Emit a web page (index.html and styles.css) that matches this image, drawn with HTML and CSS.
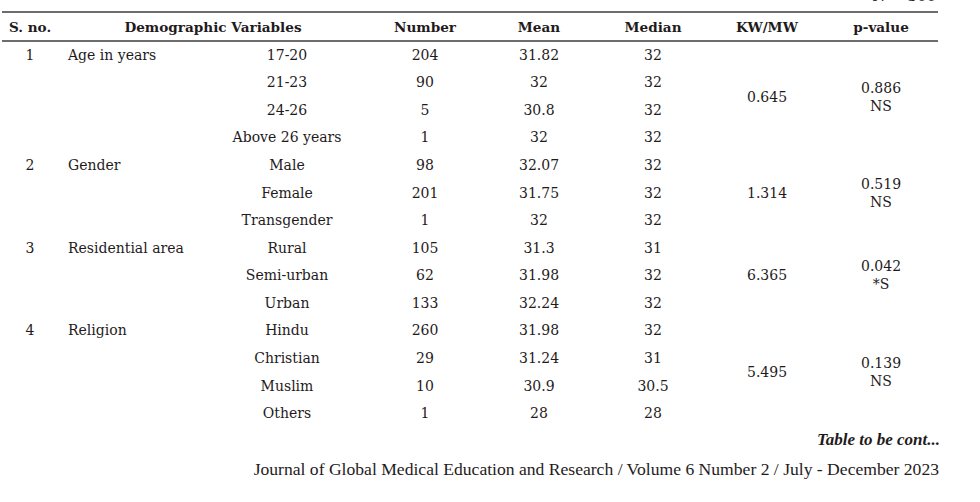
FILE: index.html
```html
<!DOCTYPE html>
<html lang="en">
<head>
    <meta charset="UTF-8">
    <title>Demographic Variables</title>
    <link rel="stylesheet" href="styles.css">
</head>
<body>
    <div class="page">
        <p class="note">N = 300</p>

        <!-- Demographic table -->
        <table class="data">
            <colgroup>
                <col class="c-sno">
                <col class="c-cat">
                <col class="c-sub">
                <col class="c-num">
                <col class="c-num">
                <col class="c-num">
                <col class="c-num">
                <col class="c-num">
            </colgroup>
            <thead>
                <tr>
                    <th>S. no.</th>
                    <th colspan="2">Demographic Variables</th>
                    <th>Number</th>
                    <th>Mean</th>
                    <th>Median</th>
                    <th>KW/MW</th>
                    <th>p-value</th>
                </tr>
            </thead>
            <tbody>
                <tr>
                    <td>1</td>
                    <td class="cat">Age in years</td>
                    <td>17-20</td><td>204</td><td>31.82</td><td>32</td>
                    <td rowspan="4">0.645</td>
                    <td rowspan="4">0.886<br>NS</td>
                </tr>
                <tr><td></td><td></td><td>21-23</td><td>90</td><td>32</td><td>32</td></tr>
                <tr><td></td><td></td><td>24-26</td><td>5</td><td>30.8</td><td>32</td></tr>
                <tr><td></td><td></td><td>Above 26 years</td><td>1</td><td>32</td><td>32</td></tr>

                <tr>
                    <td>2</td>
                    <td class="cat">Gender</td>
                    <td>Male</td><td>98</td><td>32.07</td><td>32</td>
                    <td rowspan="3">1.314</td>
                    <td rowspan="3">0.519<br>NS</td>
                </tr>
                <tr><td></td><td></td><td>Female</td><td>201</td><td>31.75</td><td>32</td></tr>
                <tr><td></td><td></td><td>Transgender</td><td>1</td><td>32</td><td>32</td></tr>

                <tr>
                    <td>3</td>
                    <td class="cat">Residential area</td>
                    <td>Rural</td><td>105</td><td>31.3</td><td>31</td>
                    <td rowspan="3">6.365</td>
                    <td rowspan="3">0.042<br>*S</td>
                </tr>
                <tr><td></td><td></td><td>Semi-urban</td><td>62</td><td>31.98</td><td>32</td></tr>
                <tr><td></td><td></td><td>Urban</td><td>133</td><td>32.24</td><td>32</td></tr>

                <tr>
                    <td>4</td>
                    <td class="cat">Religion</td>
                    <td>Hindu</td><td>260</td><td>31.98</td><td>32</td>
                    <td rowspan="4">5.495</td>
                    <td rowspan="4">0.139<br>NS</td>
                </tr>
                <tr><td></td><td></td><td>Christian</td><td>29</td><td>31.24</td><td>31</td></tr>
                <tr><td></td><td></td><td>Muslim</td><td>10</td><td>30.9</td><td>30.5</td></tr>
                <tr><td></td><td></td><td>Others</td><td>1</td><td>28</td><td>28</td></tr>
            </tbody>
        </table>

        <p class="cont">Table to be cont...</p>
        <p class="footer">Journal of Global Medical Education and Research / Volume 6 Number 2 / July - December 2023</p>
    </div>
</body>
</html>
```

FILE: styles.css
```css
/* Basic Reset */
* {
    box-sizing: border-box;
    margin: 0;
    padding: 0;
}

body {
    background: #fff;
    color: #1f1b1c;
    font-family: "DejaVu Serif", "Liberation Serif", serif;
    font-size: 14px;
}

.page {
    width: 980px;
    height: 502px;
    overflow: hidden;
    padding: 0 2px;
}

/* N = 300 note, mostly cut off above */
.note {
    width: 936px;
    height: 11px;
    line-height: 14px;
    margin-top: -11px;
    text-align: right;
    padding-right: 2px;
    font-size: 15px;
}

/* Table */
.data {
    width: 936px;
    border-collapse: collapse;
    table-layout: fixed;
    margin-top: 11px;
}

.c-sno { width: 56px; }
.c-cat { width: 148px; }
.c-sub { width: 162px; }
.c-num { width: 114px; }

.data th {
    font-weight: bold;
    font-size: 13.6px;
    height: 29px;
    border-top: 2px solid #6d6d6d;
    border-bottom: 2px solid #6d6d6d;
    text-align: center;
    vertical-align: middle;
    line-height: 18px;
}

.data td {
    height: 27.57px;
    line-height: 18px;
    text-align: center;
    vertical-align: middle;
}

.data td.cat {
    text-align: left;
    padding-left: 10px;
}

/* Footer lines */
.cont {
    text-align: right;
    font-family: "Liberation Serif", serif;
    font-style: italic;
    font-weight: bold;
    font-size: 17px;
    line-height: 18px;
    margin-top: 4px;
    padding-right: 38px;
}

.footer {
    text-align: right;
    font-family: "Liberation Serif", serif;
    font-size: 17.6px;
    line-height: 20px;
    margin-top: 10px;
    padding-right: 39px;
}
```
